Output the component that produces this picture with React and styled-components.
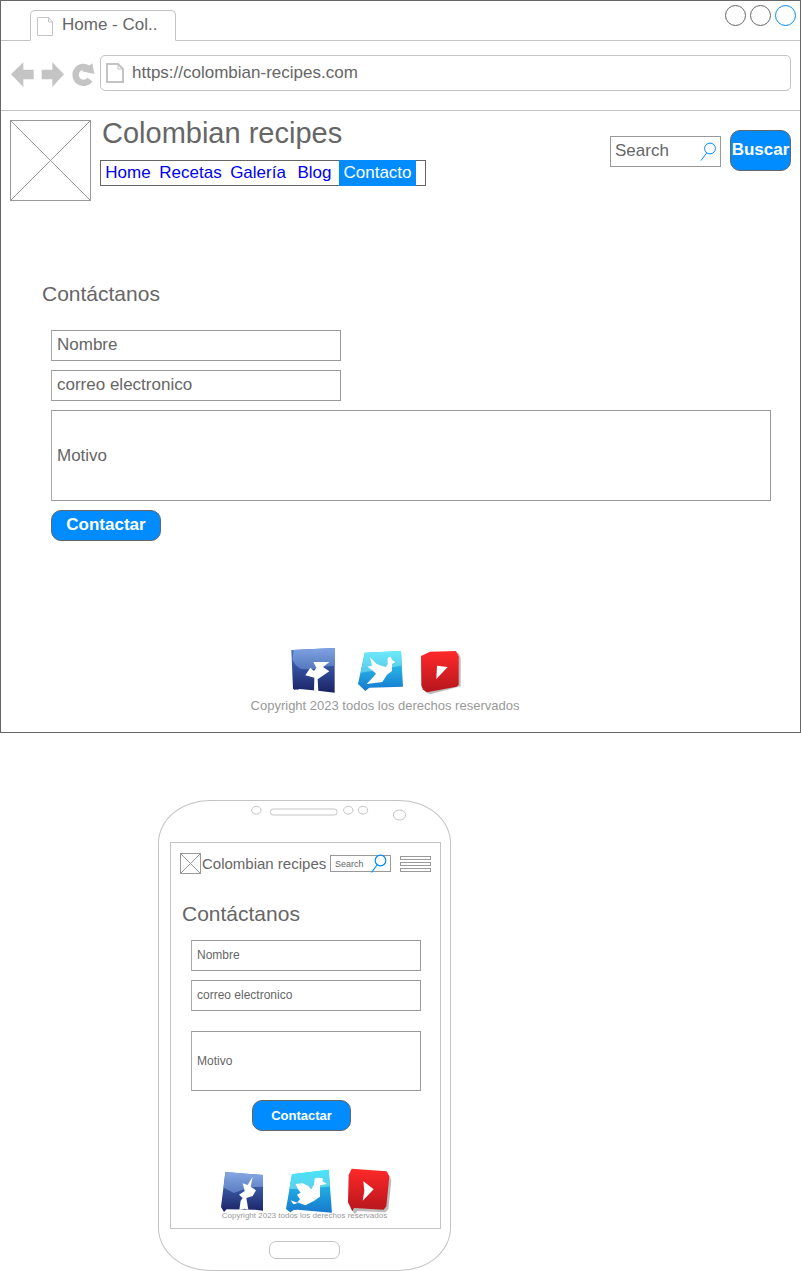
import React from "react";
import styled, { createGlobalStyle, css } from "styled-components";

const GlobalStyle = createGlobalStyle`
  *, *::before, *::after { box-sizing: border-box; }
  body {
    margin: 0;
    background: #fff;
    color: #666;
    font: 17px/20px "Liberation Sans", Arial, sans-serif;
  }
  h1, h2, p { margin: 0; font-weight: 400; }
  a { text-decoration: none; }
  svg { display: block; overflow: visible; }
`;

const plainButton = css`
  padding: 0;
  border: 0;
  background: none;
  cursor: pointer;
`;

/* Browser window */

const BrowserWindow = styled.section`
  border: 1px solid #666;
`;

const TabStrip = styled.div`
  display: flex;
  justify-content: space-between;
  align-items: flex-start;
  height: 40px;
  padding: 4px 4px 0 29px;
  border-bottom: 1px solid #c4c4c4;
`;

const Tab = styled.div`
  display: flex;
  gap: 8px;
  width: 146px;
  height: 31px;
  margin-top: 5px;
  padding: 4px 6px 0;
  border: 1px solid #c4c4c4;
  border-bottom-color: #fff;
  border-radius: 5px 5px 0 0;
  background: #fff;

  svg { margin-top: 2px; }
`;

const WindowControls = styled.div`
  display: flex;
  gap: 4px;
`;

const WindowControl = styled.button`
  ${plainButton}
  width: 21px;
  height: 21px;
  border: 1px solid ${(p) => (p.$accent ? "#008cff" : "#666")};
  border-radius: 50%;
`;

const Toolbar = styled.div`
  display: flex;
  align-items: center;
  gap: 7px;
  padding: 14px 9px 19px 10px;
  border-bottom: 1px solid #c4c4c4;
`;

const ToolButton = styled.button`
  ${plainButton}
`;

const AddressBar = styled.div`
  display: flex;
  flex: 1;
  align-items: center;
  gap: 9px;
  height: 36px;
  padding-left: 5px;
  border: 1px solid #c4c4c4;
  border-radius: 5px;
`;

const AddressInput = styled.input`
  flex: 1;
  min-width: 0;
  padding: 0;
  border: 0;
  outline: 0;
  background: none;
  color: #666;
  font: inherit;
`;

/* Site header */

const SiteHeader = styled.header`
  display: flex;
  align-items: flex-start;
  gap: 9px;
  padding: 9px 9px 0;
`;

const Brand = styled.div`
  display: flex;
  flex-direction: column;
  gap: 14px;
`;

const SiteTitle = styled.h1`
  padding-left: 2px;
  font-size: 29px;
  line-height: 26px;
`;

const SiteNav = styled.nav`
  display: grid;
  grid-template-columns: 54px 71px 64px 49px 77px;
  width: 326px;
  height: 26px;
  border: 1px solid #666;
`;

const NavLink = styled.a`
  margin: -1px 0;
  color: ${(p) => (p.$active ? "#fff" : "#00e")};
  background: ${(p) => (p.$active ? "#008cff" : "none")};
  line-height: 25px;
  text-align: center;
`;

const SearchForm = styled.form`
  display: flex;
  align-items: flex-start;
  gap: 9px;
  margin: 10px 0 0 auto;
`;

const SearchBox = styled.label`
  display: flex;
  align-items: center;
  width: ${(p) => (p.$compact ? "61px" : "111px")};
  height: ${(p) => (p.$compact ? "17px" : "31px")};
  margin-top: ${(p) => (p.$compact ? "0" : "6px")};
  padding: 0 4px;
  border: 1px solid #999;
`;

const SearchInput = styled.input`
  flex: 1;
  min-width: 0;
  padding: 0 0 ${(p) => (p.$compact ? "0" : "2px")};
  border: 0;
  outline: 0;
  background: none;
  font: inherit;
  font-size: ${(p) => (p.$compact ? "9px" : "17px")};

  &::placeholder { color: #666; opacity: 1; }
`;

const ActionButton = styled.button`
  ${plainButton}
  width: ${(p) => p.$width};
  height: ${(p) => p.$height || "31px"};
  margin-right: ${(p) => (p.$small ? "9px" : "0")};
  padding-bottom: ${(p) => (p.$small ? "0" : "1px")};
  border: 1px solid #666;
  border-radius: 10px;
  background: #008cff;
  color: #fff;
  font: inherit;
  font-size: ${(p) => (p.$small ? "13px" : "17px")};
  font-weight: 700;
  white-space: nowrap;
`;

/* Contact form */

const Contact = styled.main`
  padding: ${(p) => (p.$compact ? "28px 19px 0 11px" : "81px 29px 0 41px")};
`;

const SectionTitle = styled.h2`
  font-size: 21px;
  line-height: 24px;
`;

const ContactForm = styled.form`
  display: flex;
  flex-direction: column;
  align-items: ${(p) => (p.$compact ? "center" : "flex-start")};
  gap: 9px;
  margin: ${(p) => (p.$compact ? "14px" : "24px")} 0 0 9px;
`;

const fieldStyle = css`
  display: block;
  border: 1px solid #999;
  border-left-color: #aaa;
  border-radius: 0;
  outline: 0;
  background: none;
  color: #666;
  font: inherit;
  font-size: ${(p) => (p.$compact ? "12px" : "17px")};

  &::placeholder { color: #666; opacity: 1; }
`;

const TextField = styled.input`
  ${fieldStyle}
  width: ${(p) => (p.$compact ? "100%" : "290px")};
  height: 31px;
  padding: 0 5px 2px;
`;

const MessageField = styled.textarea`
  ${fieldStyle}
  width: 100%;
  height: ${(p) => (p.$compact ? "60px" : "91px")};
  margin-top: ${(p) => (p.$compact ? "11px" : "0")};
  padding: ${(p) => (p.$compact ? "19px" : "35px")} 5px 0;
  line-height: 20px;
  resize: none;
`;

/* Footer */

const SiteFooter = styled.footer`
  display: flex;
  flex-direction: column;
  align-items: center;
  gap: 4px;
  padding: 106px 31px 18px 0;
`;

const CompactFooter = styled(SiteFooter)`
  gap: 0;
  padding: 37px 2px 7px 0;
`;

const SocialLinks = styled.div`
  display: flex;
  gap: ${(p) => (p.$compact ? "16px" : "18px")};
  padding: ${(p) => (p.$compact ? "0 0 0 4px" : "0 12px 0 0")};
`;

const Copyright = styled.p`
  color: #999;
  font-size: ${(p) => (p.$compact ? "8px" : "13px")};
  line-height: ${(p) => (p.$compact ? "10px" : "16px")};
  margin-top: ${(p) => (p.$compact ? "-4px" : "0")};
  z-index: 1;
`;

/* Phone */

const Phone = styled.section`
  display: flex;
  flex-direction: column;
  width: 293px;
  margin: 67px 0 0 158px;
  padding: 0 9px 11px 11px;
  border: 1px solid #c4c4c4;
  border-radius: 52px / 43px;
`;

const SensorBar = styled.div`
  height: 41px;
  margin-left: -11px;
`;

const Screen = styled.div`
  border: 1px solid #c4c4c4;
`;

const PhoneHeader = styled.header`
  display: flex;
  align-items: center;
  padding: 10px 9px 0;
`;

const PhoneTitle = styled.h1`
  margin: 0 auto 0 1px;
  font-size: 15px;
  line-height: 21px;
  white-space: nowrap;
`;

const MenuButton = styled.button`
  ${plainButton}
  display: flex;
  flex-direction: column;
  gap: 2px;
  width: 31px;
  margin-left: 9px;
`;

const MenuBar = styled.span`
  height: 4px;
  border: 1px solid #999;
`;

const HomeButton = styled.button`
  ${plainButton}
  align-self: center;
  width: 71px;
  height: 18px;
  margin: 12px 2px 0 0;
  border: 1px solid #c4c4c4;
  border-radius: 7px;
`;

/* Drawings */

const ImagePlaceholder = ({ size }) => (
  <svg width={size} height={size} fill="none" stroke="#999" role="img" aria-label="Logo">
    <rect x="0.5" y="0.5" width={size - 1} height={size - 1} />
    <path d={`M0.5 0.5L${size - 0.5} ${size - 0.5}M${size - 0.5} 0.5L0.5 ${size - 0.5}`} />
  </svg>
);

const PageIcon = ({ bold }) => (
  <svg width="17" height="20" viewBox="0 0 17 20" fill="none" stroke="#c4c4c4" strokeWidth={bold ? 2 : 1}>
    <path d={bold ? "M1 1H12L17 6V19H1Z" : "M0.5 0.5H11.5L15.5 5V18.5H0.5Z"} />
    <path strokeWidth="1" d={bold ? "M12 1V6H17" : "M11.5 0.5V5H15.5"} />
  </svg>
);

const Magnifier = ({ compact }) =>
  compact ? (
    <svg width="16" height="19" viewBox="0 0 16 19" fill="none" stroke="#008cff" strokeWidth="1.2">
      <circle cx="10.5" cy="6.5" r="5.3" />
      <path d="M7 11L1.5 18.5" />
    </svg>
  ) : (
    <svg width="16" height="19" viewBox="0 0 16 19" fill="none" stroke="#008cff">
      <circle cx="10" cy="6.5" r="5.4" />
      <path d="M6.8 10.8L1 18.6" />
    </svg>
  );

const ArrowIcon = ({ forward }) => (
  <svg width="23" height="26" viewBox="0 0 69 78" fill="#c4c4c4">
    <path
      d={
        forward
          ? "M69 43L34 7V29H2V58H34V81Z"
          : "M0 43L37 7V29H68V58H37V81Z"
      }
    />
  </svg>
);

const ReloadIcon = () => (
  <svg width="22" height="26" viewBox="213 180 66 78">
    <path d="M270 239A24 24 0 1 1 266 206" fill="none" stroke="#c4c4c4" strokeWidth="19" />
    <path d="M277 190L283 222L245 214Z" fill="#c4c4c4" />
  </svg>
);

const Sensors = () => (
  <svg width="291" height="41" viewBox="0 0 291 41" fill="none" stroke="#c4c4c4">
    <ellipse cx="97.3" cy="9.2" rx="4.7" ry="3.9" />
    <rect x="111.5" y="8" width="66.5" height="6" rx="2.5" />
    <ellipse cx="189.3" cy="9.2" rx="4.7" ry="3.9" />
    <ellipse cx="204" cy="9.2" rx="4.7" ry="3.9" />
    <ellipse cx="240.5" cy="14" rx="6.2" ry="5" />
  </svg>
);

const Gradient = ({ id, from, to }) => (
  <linearGradient id={id} x1="0" y1="0" x2="0" y2="1">
    <stop offset="0" stopColor={from} />
    <stop offset="1" stopColor={to} />
  </linearGradient>
);

const FacebookIcon = ({ compact }) =>
  compact ? (
    <svg width="47" height="47" viewBox="30 24 141 141">
      <Gradient id="fbPhone" from="#4c7bcb" to="#1c2366" />
      <Gradient id="fbPhoneShine" from="#86a8e4" to="#5c7cc0" />
      <path d="M46 36L159 45V152L135 149L50 148L42 156L33 141Z" fill="url(#fbPhone)" />
      <path d="M46 36L159 45V80L118 82L72 99L41 83Z" fill="url(#fbPhoneShine)" />
      <path d="M128 50L122 80L138 91L128 108L109 114L115 149L104 146L88 150L92 122L98 114L87 104L104 93L98 70L113 75Z" fill="#fff" />
    </svg>
  ) : (
    <svg width="47" height="47" viewBox="33 21 141 141">
      <Gradient id="fbDesktop" from="#4677cc" to="#1b2164" />
      <Gradient id="fbDesktopShine" from="#7ea2e2" to="#5678bd" />
      <path d="M34 30L164 24V158L114 152L59 147L52 149L47 148L45 151L39 146Z" fill="url(#fbDesktop)" />
      <path d="M41 30L164 24V77L125 80Q96 92 61 86Q46 77 37 59Z" fill="url(#fbDesktopShine)" />
      <path d="M100 66L148 66L129 81L148 94L113 118L115 153L102 152L103 113L76 106L91 83L102 93L109 83Z" fill="#fff" />
    </svg>
  );

const TwitterIcon = ({ compact }) =>
  compact ? (
    <svg width="47" height="47" viewBox="219 24 141 141">
      <Gradient id="twPhone" from="#27d3f3" to="#1878cd" />
      <Gradient id="twPhoneShine" from="#48e4f8" to="#5fd0ec" />
      <path d="M246 43L356 29L366 158L262 149L251 150L241 157L228 147Z" fill="url(#twPhone)" />
      <path d="M246 43L356 29L360 79Q300 89 238 86Z" fill="url(#twPhoneShine)" />
      <path d="M257 72L278 70L295 78L303 88L312 74L314 56L320 53L338 54L338 64L350 72L330 76L330 110L310 124L286 136L262 127L270 118L261 104L272 98L264 88Z M242 121L264 129L250 133Z" fill="#fff" />
    </svg>
  ) : (
    <svg width="47" height="47" viewBox="228 21 141 141">
      <Gradient id="twDesktop" from="#35daf5" to="#1578cf" />
      <Gradient id="twDesktopShine" from="#6ceafa" to="#58c7e8" />
      <path d="M254 38L363 33L369 140L268 143L256 153L234 132Z" fill="url(#twDesktop)" />
      <path d="M254 38L363 33L366 76Q300 91 242 98Z" fill="url(#twDesktopShine)" />
      <path d="M270 52L290 72L304 77L318 81L323 72V53L332 50L337 61L346 66L336 72V93L321 104L307 126L260 132L276 115L288 101L276 90L262 80L276 77Z" fill="#fff" />
    </svg>
  );

const YoutubeIcon = ({ compact }) =>
  compact ? (
    <svg width="47" height="47" viewBox="408 24 141 141">
      <Gradient id="ytPhone" from="#ff2929" to="#b5161d" />
      <path d="M430 34L535 43L544 60L535 148L526 157L442 153L434 162L422 145Z" fill="#bbb" />
      <path d="M425 26L530 34L538 49L529 139L521 149L432 144L427 154L414 127L416 45Z" fill="url(#ytPhone)" />
      <path d="M460 64L491 88L458 122L463 93Z" fill="#fff" />
    </svg>
  ) : (
    <svg width="47" height="47" viewBox="423 21 141 141">
      <Gradient id="ytDesktop" from="#ff2929" to="#b5161d" />
      <path d="M441 43L535 39L542 53V139L450 163L435 155Z" fill="#bbb" />
      <path d="M423 48L450 35L528 33L536 48V134L530 140L441 157L429 149L424 137Z" fill="url(#ytDesktop)" />
      <path d="M471 77L503 81L469 117Z" fill="#fff" />
    </svg>
  );

const Social = ({ compact }) => (
  <SocialLinks $compact={compact}>
    <a href="#facebook" aria-label="Facebook"><FacebookIcon compact={compact} /></a>
    <a href="#twitter" aria-label="Twitter"><TwitterIcon compact={compact} /></a>
    <a href="#youtube" aria-label="YouTube"><YoutubeIcon compact={compact} /></a>
  </SocialLinks>
);

const ContactSection = ({ compact }) => (
  <Contact as={compact ? "div" : "main"} $compact={compact}>
    <SectionTitle>Contáctanos</SectionTitle>
    <ContactForm $compact={compact} onSubmit={(e) => e.preventDefault()}>
      <TextField $compact={compact} type="text" aria-label="Nombre" placeholder="Nombre" />
      <TextField $compact={compact} type="email" aria-label="correo electronico" placeholder="correo electronico" />
      <MessageField $compact={compact} aria-label="Motivo" placeholder="Motivo" />
      <ActionButton type="submit" $small={compact} $width={compact ? "99px" : "110px"}>
        Contactar
      </ActionButton>
    </ContactForm>
  </Contact>
);

const links = ["Home", "Recetas", "Galería", "Blog", "Contacto"];

export default function App() {
  return (
    <>
      <GlobalStyle />
      <BrowserWindow>
        <TabStrip>
          <Tab>
            <PageIcon />
            <span>Home - Col..</span>
          </Tab>
          <WindowControls>
            <WindowControl aria-label="Minimizar" />
            <WindowControl aria-label="Maximizar" />
            <WindowControl aria-label="Cerrar" $accent />
          </WindowControls>
        </TabStrip>
        <Toolbar>
          <ToolButton aria-label="Atrás"><ArrowIcon /></ToolButton>
          <ToolButton aria-label="Adelante"><ArrowIcon forward /></ToolButton>
          <ToolButton aria-label="Recargar"><ReloadIcon /></ToolButton>
          <AddressBar>
            <PageIcon bold />
            <AddressInput aria-label="Dirección" defaultValue="https://colombian-recipes.com" />
          </AddressBar>
        </Toolbar>
        <SiteHeader>
          <ImagePlaceholder size={81} />
          <Brand>
            <SiteTitle>Colombian recipes</SiteTitle>
            <SiteNav>
              {links.map((name) => (
                <NavLink key={name} href={`#${name.toLowerCase()}`} $active={name === "Contacto"}>
                  {name}
                </NavLink>
              ))}
            </SiteNav>
          </Brand>
          <SearchForm onSubmit={(e) => e.preventDefault()}>
            <SearchBox>
              <SearchInput type="text" aria-label="Search" placeholder="Search" />
              <Magnifier />
            </SearchBox>
            <ActionButton type="submit" $width="61px" $height="41px">Buscar</ActionButton>
          </SearchForm>
        </SiteHeader>
        <ContactSection />
        <SiteFooter>
          <Social />
          <Copyright>Copyright 2023 todos los derechos reservados</Copyright>
        </SiteFooter>
      </BrowserWindow>

      <Phone>
        <SensorBar><Sensors /></SensorBar>
        <Screen>
          <PhoneHeader>
            <ImagePlaceholder size={21} />
            <PhoneTitle>Colombian recipes</PhoneTitle>
            <SearchBox $compact>
              <SearchInput $compact type="text" aria-label="Search" placeholder="Search" />
              <Magnifier compact />
            </SearchBox>
            <MenuButton aria-label="Menú">
              <MenuBar />
              <MenuBar />
              <MenuBar />
            </MenuButton>
          </PhoneHeader>
          <ContactSection compact />
          <CompactFooter>
            <Social compact />
            <Copyright $compact>Copyright 2023 todos los derechos reservados</Copyright>
          </CompactFooter>
        </Screen>
        <HomeButton aria-label="Inicio" />
      </Phone>
    </>
  );
}
